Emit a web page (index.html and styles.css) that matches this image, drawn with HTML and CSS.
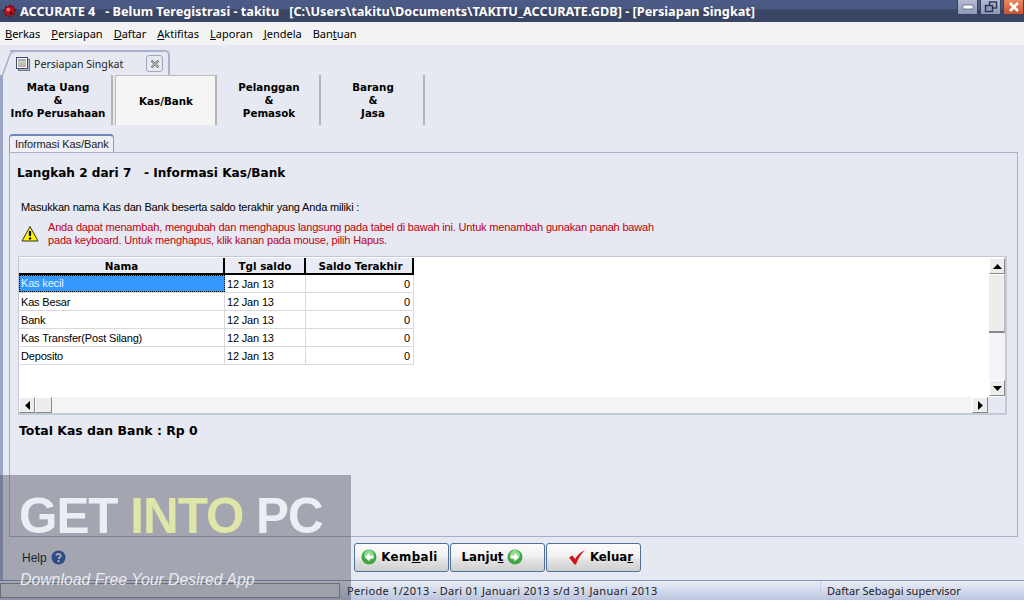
FILE: index.html
```html
<!DOCTYPE html>
<html lang="id">
<head>
<meta charset="utf-8">
<title>ACCURATE 4</title>
<link rel="stylesheet" href="styles.css">
</head>
<body>
<div class="app">
  <header class="titlebar">
    <svg class="logo" width="16" height="16" viewBox="0 0 16 16"><path d="M8 1 L9.5 3 L12 2.5 L12 5 L15 7 L12.5 9 L12.5 12 L9.5 12 L8 15 L6 12.5 L3 13 L3 10 L0.5 8 L3 6 L3 3 L6 3.5 Z" fill="#7a0f16"/><circle cx="7.5" cy="8" r="4.6" fill="#b5141e"/><circle cx="6.3" cy="6.6" r="1.9" fill="#ee6a70"/><circle cx="9" cy="10" r="1.3" fill="#3e0609"/></svg>
    <span class="title-text">ACCURATE 4&nbsp;&nbsp;&nbsp;- Belum Teregistrasi - takitu &nbsp; [C:\Users\takitu\Documents\TAKITU_ACCURATE.GDB] - [Persiapan Singkat]</span>
    <div class="win-btns">
      <div class="win-btn"><svg width="12" height="8" viewBox="0 0 12 8"><rect x="1" y="2" width="10" height="4" rx="1" fill="#fff" stroke="#39425f" stroke-width=".6"/></svg></div>
      <div class="win-btn"><svg width="14" height="12" viewBox="0 0 14 12"><rect x="5.5" y="1" width="7" height="6" fill="none" stroke="#2c3350" stroke-width="1.4"/><rect x="1.5" y="4.5" width="7" height="6" fill="#8f98b8" stroke="#2c3350" stroke-width="1.4"/></svg></div>
      <div class="win-btn close"><svg width="12" height="10" viewBox="0 0 12 10"><path d="M2 1 L10 9 M10 1 L2 9" stroke="#fff" stroke-width="2.6"/></svg></div>
    </div>
  </header>

  <nav class="menubar">
    <span><u>B</u>erkas</span><span><u>P</u>ersiapan</span><span><u>D</u>aftar</span><span><u>A</u>ktifitas</span><span><u>L</u>aporan</span><span><u>J</u>endela</span><span>Ban<u>t</u>uan</span>
  </nav>

  <div class="doc-tabs">
    <div class="doc-tab">
      <svg width="16" height="16" viewBox="0 0 16 16"><rect x="3.5" y="3.5" width="11" height="11" fill="#b4bcd0" stroke="#68708c"/><rect x="1.5" y="1.5" width="11" height="11" fill="#fff" stroke="#3f4868"/><path d="M3 4h8" stroke="#3a62b0"/><path d="M3 6h8" stroke="#c89040"/><path d="M3 8h8" stroke="#4a9a5a"/><path d="M3 10h8" stroke="#b04a6a"/></svg>
      <span class="doc-tab-label">Persiapan Singkat</span>
      <span class="doc-tab-close"><svg width="10" height="10" viewBox="0 0 10 10"><path d="M1.5 1.5 L8.5 8.5 M8.5 1.5 L1.5 8.5" stroke="#6c6c6c" stroke-width="2.2"/><path d="M1.5 1.5 L8.5 8.5 M8.5 1.5 L1.5 8.5" stroke="#eee" stroke-width=".7"/></svg></span>
    </div>
  </div>

  <main class="workspace">
    <div class="wizard-tabs">
      <div class="wizard-tab first">Mata Uang<br>&amp;<br>Info Perusahaan</div>
      <div class="wizard-tab active">Kas/Bank</div>
      <div class="wizard-tab">Pelanggan<br>&amp;<br>Pemasok</div>
      <div class="wizard-tab">Barang<br>&amp;<br>Jasa</div>
    </div>

    <div class="page-tabs"><div class="page-tab">Informasi Kas/Bank</div></div>

    <section class="panel">
      <h1 class="step">Langkah 2 dari 7 &nbsp; - Informasi Kas/Bank</h1>
      <p class="intro">Masukkan nama Kas dan Bank beserta saldo terakhir yang Anda miliki :</p>
      <div class="notice">
        <svg width="18" height="18" viewBox="0 0 18 18"><path d="M9 1.5 L17 16 H1 Z" fill="#fff200" stroke="#333" stroke-linejoin="round"/><path d="M9 6 V11" stroke="#000" stroke-width="2.2"/><circle cx="9" cy="13.4" r="1.2"/></svg>
        <p>Anda dapat menambah, mengubah dan menghapus langsung pada tabel di bawah ini. Untuk menambah gunakan panah bawah<br>pada keyboard. Untuk menghapus, klik kanan pada mouse, pilih Hapus.</p>
      </div>

      <div class="grid-frame">
        <div class="grid-main">
          <div class="grid-body">
            <div class="row head"><div class="c1">Nama</div><div class="c2">Tgl saldo</div><div class="c3">Saldo Terakhir</div></div>
            <div class="row"><div class="c1 selected">Kas kecil</div><div class="c2">12 Jan 13</div><div class="c3">0</div></div>
            <div class="row"><div class="c1">Kas Besar</div><div class="c2">12 Jan 13</div><div class="c3">0</div></div>
            <div class="row"><div class="c1">Bank</div><div class="c2">12 Jan 13</div><div class="c3">0</div></div>
            <div class="row"><div class="c1">Kas Transfer(Post Silang)</div><div class="c2">12 Jan 13</div><div class="c3">0</div></div>
            <div class="row"><div class="c1">Deposito</div><div class="c2">12 Jan 13</div><div class="c3">0</div></div>
          </div>
          <div class="vscroll">
            <div class="sbtn"><svg width="9" height="5" viewBox="0 0 9 5"><path d="M4.5 0 L9 5 H0 Z"/></svg></div>
            <div class="vthumb"></div>
            <div class="vtrack"></div>
            <div class="sbtn"><svg width="9" height="5" viewBox="0 0 9 5"><path d="M0 0 H9 L4.5 5 Z"/></svg></div>
          </div>
        </div>
        <div class="hscroll">
          <div class="sbtn"><svg width="5" height="9" viewBox="0 0 5 9"><path d="M5 0 V9 L0 4.5 Z"/></svg></div>
          <div class="hthumb"></div>
          <div class="htrack"></div>
          <div class="sbtn"><svg width="5" height="9" viewBox="0 0 5 9"><path d="M0 0 V9 L5 4.5 Z"/></svg></div>
          <div class="corner"></div>
        </div>
      </div>

      <p class="total">Total Kas dan Bank : Rp 0</p>
    </section>

    <div class="footer">
      <div class="help">Help
        <svg width="15" height="15" viewBox="0 0 15 15"><circle cx="7.5" cy="7.5" r="7" fill="#1c4fa8"/><path d="M5.2 5.6 C5.4 3.4 9.8 3.2 9.8 5.7 C9.8 7.3 7.6 7.3 7.6 9" fill="none" stroke="#fff" stroke-width="1.7"/><circle cx="7.6" cy="11.2" r="1.1" fill="#fff"/></svg>
      </div>
      <div class="actions">
        <button class="btn back"><svg class="go" width="16" height="16" viewBox="0 0 16 16"><circle cx="8" cy="8" r="7.5" fill="#3fa845"/><circle cx="8" cy="6" r="5" fill="#8bd98a"/><path d="M8.5 3.5 L4 8 L8.5 12.5 V9.6 H12.5 V6.4 H8.5 Z" fill="#fff"/></svg><span>Kem<u>b</u>ali</span></button>
        <button class="btn next"><span>Lanju<u>t</u></span><svg class="go" width="16" height="16" viewBox="0 0 16 16"><circle cx="8" cy="8" r="7.5" fill="#3fa845"/><circle cx="8" cy="6" r="5" fill="#8bd98a"/><path d="M7.5 3.5 L12 8 L7.5 12.5 V9.6 H3.5 V6.4 H7.5 Z" fill="#fff"/></svg></button>
        <button class="btn exit"><svg class="check" width="18" height="16" viewBox="0 0 18 16"><path d="M1 8.5 L4.5 6.5 L7 10 C9.5 6 12.5 3 17 1 C13 5 10 9.5 8 15.5 H6.5 Z" fill="#d2131c"/></svg><span>Kelua<u>r</u></span></button>
      </div>
    </div>
  </main>

  <footer class="statusbar">
    <div class="progress"></div>
    <div class="st-period">Periode 1/2013 - Dari 01 Januari 2013 s/d 31 Januari 2013</div>
    <div class="st-user">Daftar Sebagai supervisor</div>
  </footer>

  <aside class="watermark">
    <div class="wm-title">GET <span>INTO</span> PC</div>
    <div class="wm-sub">Download Free Your Desired App</div>
  </aside>
</div>
</body>
</html>
```

FILE: styles.css
```css
* { box-sizing: border-box; }
html, body { margin: 0; padding: 0; }
body { width: 1024px; height: 600px; overflow: hidden; font-family: "Liberation Sans", Arial, sans-serif; color: #000; }
.app { position: relative; width: 1024px; height: 600px; display: flex; flex-direction: column; background: #e6e9f2; }

.titlebar { height: 22px; flex: none; display: flex; align-items: center; padding-left: 2px; background: linear-gradient(#4c5b87 0, #4a5883 40%, #3b4667 45%, #3a4565 100%); }
.logo { flex: none; margin-right: 2px; }
.title-text { color: #fff; font: bold 12.7px "Noto Sans", "Open Sans", sans-serif; white-space: pre; flex: 1; }
.win-btns { display: flex; gap: 2px; align-self: flex-start; }
.win-btn { width: 21px; height: 15px; display: flex; align-items: center; justify-content: center; border: 1px solid #39425f; border-top: 0; border-radius: 0 0 2px 2px; background: linear-gradient(#b4bbd2, #8f98b8); }
.win-btn.close { background: linear-gradient(#e98a62, #c9542f); }

.menubar { height: 23px; flex: none; display: flex; align-items: center; gap: 11px; padding-left: 5px; background: #f3f3f3; font: 11px "Noto Sans", sans-serif; }

.doc-tabs { height: 30px; flex: none; padding: 5px 0 0 10px; display: flex; align-items: flex-end; }
.doc-tab { position: relative; width: 160px; height: 25px; display: flex; align-items: center; padding: 0 5px; gap: 3px; border: 2px solid #a9b3cf; border-left: 0; border-bottom: 0; border-radius: 0 5px 0 0; background: #e6e9f2; }
.doc-tab::before { content: ""; position: absolute; left: -4px; top: -2px; bottom: 0; width: 14px; background: #e6e9f2; border: 2px solid #a9b3cf; border-right: 0; border-bottom: 0; border-radius: 6px 0 0 0; transform: skewX(-20deg); z-index: 0; }
.doc-tab > * { position: relative; z-index: 1; }
.doc-tab-label { flex: 1; font: 10.6px "Noto Sans", sans-serif; color: #222; }
.doc-tab-close { width: 17px; height: 17px; border: 1px solid #a0a8bc; border-radius: 3px; display: flex; align-items: center; justify-content: center; background: #e6e9f0; }

.workspace { flex: 1; min-height: 0; display: flex; flex-direction: column; border-left: 3px solid #9aa5c8; }

.wizard-tabs { height: 50px; flex: none; display: flex; }
.wizard-tab { display: flex; align-items: center; justify-content: center; text-align: center; width: 104px; font: bold 10.3px/13px "DejaVu Sans", sans-serif; border-right: 2px solid #b5b5b5; padding: 1px 0 0 2px; }
.wizard-tab.first { width: 110px; margin-right: 2px; }
.wizard-tab.active { width: 102px; background: #f5f5f5; border-top: 1px solid #bbb; border-left: 1px solid #bbb; padding-left: 1px; }

.page-tabs { height: 27px; flex: none; padding: 9px 0 0 6px; display: flex; }
.page-tab { height: 18px; margin-bottom: -1px; position: relative; z-index: 1; padding: 1px 4px 0 5px; font-size: 11px; line-height: 15px; letter-spacing: -0.1px; color: #222; background: #eef0f6; border: 1px solid #8d9dc0; border-bottom: 0; border-radius: 4px 4px 0 0; border-top: 2px solid #6d86b4; }

.panel { height: 385px; flex: none; margin: 0 6px; padding: 0 10px 0 8px; border: 1px solid #a6b0c8; }
.step { margin: 12px 0 0 -1px; font: bold 12.1px/16px "DejaVu Sans", sans-serif; }
.intro { margin: 19px 0 0 3px; font-size: 11px; line-height: 14px; letter-spacing: -0.17px; }
.notice { display: flex; gap: 9px; margin: 7px 0 0 3px; align-items: center; }
.notice p { margin: 0; color: #c00010; font-size: 11px; line-height: 13px; letter-spacing: -0.17px; }

.grid-frame { margin-top: 9px; height: 159px; padding-top: 1px; border: 1px solid #c4c9d6; border-width: 1px 2px 2px 1px; background: #fff; display: flex; flex-direction: column; }
.grid-main { height: 139px; flex: none; display: flex; }
.grid-body { flex: 1; font-size: 11px; letter-spacing: -0.17px; }
.row { display: flex; height: 18px; width: 395px; border-bottom: 1px solid #d9d9d9; }
.row > div { padding: 0 2px; line-height: 18px; border-right: 1px solid #d9d9d9; white-space: nowrap; }
.c1 { width: 206px; }
.c2 { width: 81px; }
.c3 { width: 108px; text-align: right; padding-right: 3px !important; }
.selected { background: #3399ff; color: #e8f2ff; border: 1px dotted #000 !important; line-height: 15px !important; padding-left: 1px !important; }
.row.head { background: #e8ebf3; border-bottom: 2px solid #000; height: 17px; font: bold 10.4px "DejaVu Sans", sans-serif; letter-spacing: 0; }
.head > .c1, .head > .c2 { text-align: center; border-right: 2px solid #000; line-height: 16px; padding: 0 0 0 1px; }
.head > .c3 { text-align: center; border-right: 2px solid #000; line-height: 16px; padding: 0 0 0 3px !important; }

.sbtn { width: 16px; height: 16px; flex: none; display: flex; align-items: center; justify-content: center; background: #ededed; border: 1px solid #fff; border-right-color: #888; border-bottom-color: #888; }
.vscroll { width: 16px; flex: none; display: flex; flex-direction: column; padding-bottom: 1px; }
.vthumb { height: 59px; flex: none; background: #ededed; border-bottom: 2px solid #888; border-right: 1px solid #bbb; border-top: 1px solid #fff; }
.vtrack { flex: 1; background: #f4f4f6; }
.hscroll { flex: 1; display: flex; background: #eef0f6; }
.hthumb { width: 17px; flex: none; background: #ededed; border: 1px solid #fff; border-right-color: #888; border-bottom-color: #888; }
.htrack { flex: 1; background: #f4f4f6; }
.corner { width: 17px; flex: none; background: #e6e9f2; }

.total { margin: 8px 0 0 1px; font: bold 12.45px/16px "DejaVu Sans", sans-serif; }

.footer { height: 39px; flex: none; margin-right: 6px; padding-top: 1px; display: flex; align-items: center; }
.help { width: 351px; padding: 1px 0 0 19px; font-size: 12px; display: flex; align-items: center; gap: 4px; }
.actions { display: flex; gap: 1px; }
.btn { width: 95px; height: 29px; display: flex; align-items: center; justify-content: center; gap: 4px; border: 1px solid #4f7199; border-radius: 3px; background: linear-gradient(#fbfbfb, #f2f2f2 45%, #e2e2e2 60%, #cfcfcf); font: bold 11.8px "DejaVu Sans", sans-serif; color: #000; padding: 0; }
.btn.back { padding-right: 4px; }
.btn.back span { letter-spacing: 0.4px; }
.btn.next { padding-right: 10px; }
.btn.exit { padding-left: 14px; }

.statusbar { height: 20px; flex: none; display: flex; align-items: center; background: linear-gradient(#e9eef7, #cfd6ea 60%, #bcc5de); border-top: 1px solid #7f93b6; font: 11px "Noto Sans", sans-serif; color: #222; }
.progress { width: 340px; height: 15px; flex: none; background: #dcdfe6; border: 1px solid #888; }
.st-period { width: 480px; padding-left: 7px; letter-spacing: 0.3px; white-space: nowrap; }
.st-user { flex: 1; padding-left: 6px; border-left: 1px solid #c6cce0; line-height: 19px; }

.watermark { position: absolute; left: 0; top: 475px; width: 351px; height: 125px; background: rgba(72, 74, 88, 0.42); pointer-events: none; }
.wm-title { margin: 13px 0 0 19px; font: bold 49.4px/56px "Liberation Sans", sans-serif; letter-spacing: -1px; white-space: nowrap; color: #eceef3; }
.wm-title span { color: #dfe6a8; }
.wm-sub { margin: 26px 0 0 20px; font: italic 15.8px/20px "Liberation Sans", sans-serif; color: #e9ebf0; white-space: nowrap; }
```
